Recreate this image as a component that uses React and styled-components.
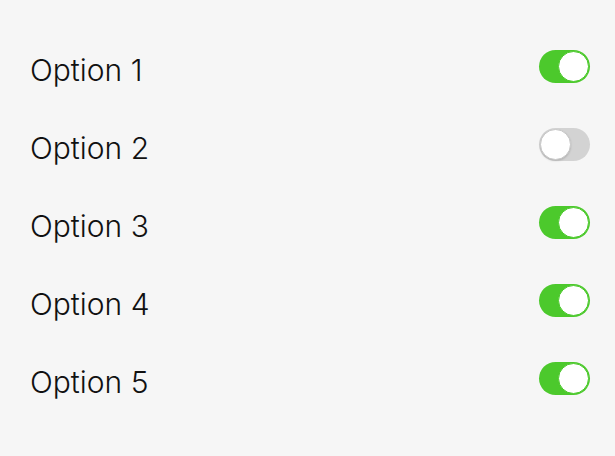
import { useState } from "react";
import styled, { createGlobalStyle } from "styled-components";

const GlobalStyle = createGlobalStyle`
  body {
    margin: 0;
    background: #f6f6f6;
    font-family: Inter, "Noto Sans", sans-serif;
  }
`;

const List = styled.ul`
  list-style: none;
  margin: 0;
  padding: 29px 25px 0 30px;
`;

const Row = styled.li`
  display: flex;
  align-items: center;
  justify-content: space-between;
  height: 78px;
`;

const Label = styled.span`
  font-size: 30px;
  font-weight: 300;
  color: #111;
  margin-top: 4px;
`;

const Track = styled.button`
  position: relative;
  width: 51px;
  height: 33px;
  padding: 0;
  border: none;
  border-radius: 17px;
  cursor: pointer;
  background: ${(p) => (p.$on ? "#4cc92c" : "#d3d3d3")};
  margin-top: -4px;
`;

const Knob = styled.span`
  position: absolute;
  top: 1px;
  left: ${(p) => (p.$on ? "19px" : "1px")};
  width: 29px;
  height: 29px;
  border-radius: 50%;
  background: #fff;
  border: 1px solid ${(p) => (p.$on ? "#4cc92c" : "#c8c8c8")};
  box-shadow: ${(p) => (p.$on ? "none" : "0 1px 2px rgba(0,0,0,0.15)")};
  transition: left 0.2s;
`;

const initial = [true, false, true, true, true];

const App = () => {
  const [opts, setOpts] = useState(initial);
  const toggle = (i) => setOpts(opts.map((v, j) => (j === i ? !v : v)));

  return (
    <>
      <GlobalStyle />
      <List>
        {opts.map((on, i) => (
          <Row key={i}>
            <Label>Option {i + 1}</Label>
            <Track $on={on} onClick={() => toggle(i)}>
              <Knob $on={on} />
            </Track>
          </Row>
        ))}
      </List>
    </>
  );
};

export default App;
